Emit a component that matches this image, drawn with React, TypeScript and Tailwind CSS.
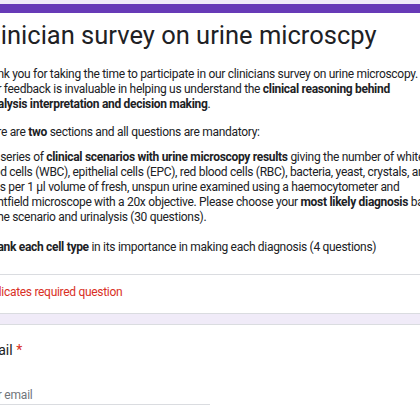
export default function App() {
  return (
    <div
      className="h-[420px] w-[420px] overflow-hidden bg-[#f0ebf8] pt-[4px] text-[#202124]"
      style={{ fontFamily: "Roboto, 'Liberation Sans', sans-serif" }}
    >
      <div className="ml-[-47px] flex w-[520px] flex-col gap-[10px]">
        {/* header card */}
        <div className="rounded-lg border border-t-[9px] border-[#dadce0] border-t-[#673ab7] bg-white">
          <div className="px-[24px] pb-[19px] pt-[6px]">
            <h1 className="text-[25.5px] leading-[32px] font-normal">
              Clinician survey on urine microscpy
            </h1>
            <div className="mt-[16px] w-[467px] text-[12px] leading-[15px] tracking-[-0.3px]">
              <p>
                Thank you for taking the time to participate in our clinicians survey on urine
                microscopy.
                <br />
                Your feedback is invaluable in helping us understand the{" "}
                <b className="font-bold">
                  clinical reasoning behind
                  <br />
                  urinalysis interpretation and decision making
                </b>
                .
              </p>
              <p className="mt-[13px]">
                There are <b>two</b> sections and all questions are mandatory:
              </p>
              <p className="mt-[10px]">
                1. A series of <b>clinical scenarios with urine microscopy results</b> giving the
                number of white blood cells (WBC), epithelial cells (EPC), red blood cells (RBC),
                bacteria, yeast, crystals, and casts per 1 µl volume of fresh, unspun urine
                examined using a haemocytometer and brightfield microscope with a 20x objective.
                Please choose your <b>most likely diagnosis</b> based on the scenario and urinalysis
                (30 questions).
              </p>
              <p className="mt-[15px]">
                2. <b>Rank each cell type</b> in its importance in making each diagnosis (4
                questions)
              </p>
            </div>
          </div>
          <div className="border-t border-[#dadce0] px-[24px] pb-[13px] pt-[10px] text-[12px] leading-[15px] tracking-[-0.3px] text-[#d93025]">
            * Indicates required question
          </div>
        </div>

        {/* email card */}
        <div className="rounded-lg border border-[#dadce0] bg-white px-[24px] pb-[24px] pt-[16px]">
          <div className="text-[14px] leading-[18px]">
            Email <span className="text-[#d93025]">*</span>
          </div>
          <div className="mt-[28px] w-[232px] border-b border-[#dadce0] pb-[1px] text-[12px] leading-[16px] tracking-[-0.2px] text-[#70757a]">
            Your email
          </div>
        </div>
      </div>
    </div>
  );
}
